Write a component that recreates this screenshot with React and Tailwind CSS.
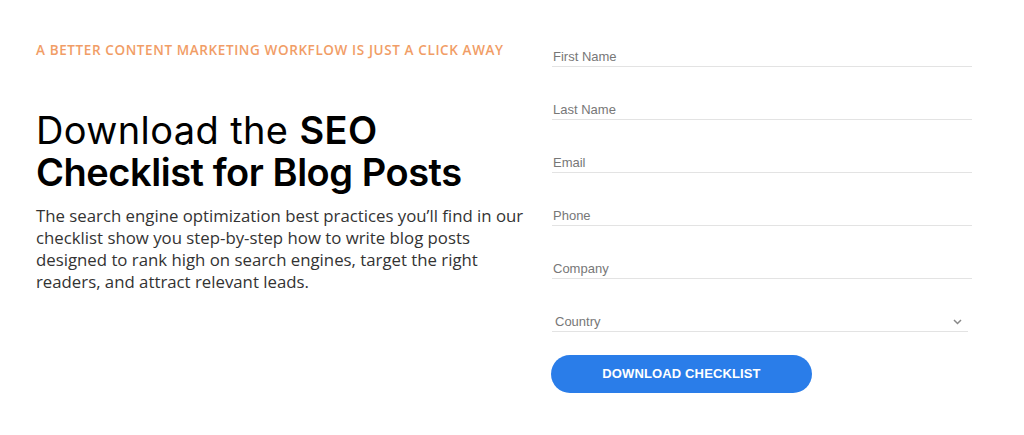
import React from 'react';

const fields = ['First Name', 'Last Name', 'Email', 'Phone', 'Company'];

export default function App() {
  return (
    <div className="w-[1024px] h-[435px] bg-white flex overflow-hidden">
      {/* Left copy */}
      <div className="w-[516px] pl-[36px] pt-[42px]">
        <p className="font-['Open_Sans',sans-serif] font-semibold text-[13.5px] leading-[16px] tracking-[0.045em] uppercase text-[#f19d66] whitespace-nowrap">
          A better content marketing workflow is just a click away
        </p>
        <h1 className="mt-[51px] font-['Inter',sans-serif] text-[38px] leading-[42px] text-black whitespace-nowrap">
          <div className="tracking-[0.01em]">
            Download the <span className="font-semibold">SEO</span>
          </div>
          <div className="font-semibold tracking-[-0.012em]">Checklist for Blog Posts</div>
        </h1>
        <p className="mt-[12px] w-[492px] font-['Open_Sans',sans-serif] text-[16.8px] leading-[22px] text-[#333]">
          The search engine optimization best practices you’ll find in our checklist show you step-by-step how to write blog posts designed to rank high on search engines, target the right readers, and attract relevant leads.
        </p>
      </div>

      {/* Form */}
      <div className="w-[420px] ml-[36px] pt-[49px] font-['Liberation_Sans',Arial,sans-serif]">
        <div className="flex flex-col gap-[35px]">
          {fields.map(f => (
            <div key={f} className="border-b border-[#e3e3e3] pb-[1px] pl-[1px] text-[13px] leading-[16px] text-[#777]">
              {f}
            </div>
          ))}
          <div className="w-[416px] flex items-center justify-between border-b border-[#e3e3e3] pb-[1px] pl-[3px] pr-[6px] text-[13px] leading-[16px] text-[#777]">
            <span>Country</span>
            <svg width="9" height="6" viewBox="0 0 9 6" fill="none">
              <path d="M1 1l3.5 3.5L8 1" stroke="#888" strokeWidth="1.5" />
            </svg>
          </div>
        </div>
        <button className="mt-[23px] -ml-[1px] w-[261px] h-[38px] rounded-full bg-[#2a7de9] text-white font-bold text-[13px] tracking-[0.01em]">
          DOWNLOAD CHECKLIST
        </button>
      </div>
    </div>
  );
}
